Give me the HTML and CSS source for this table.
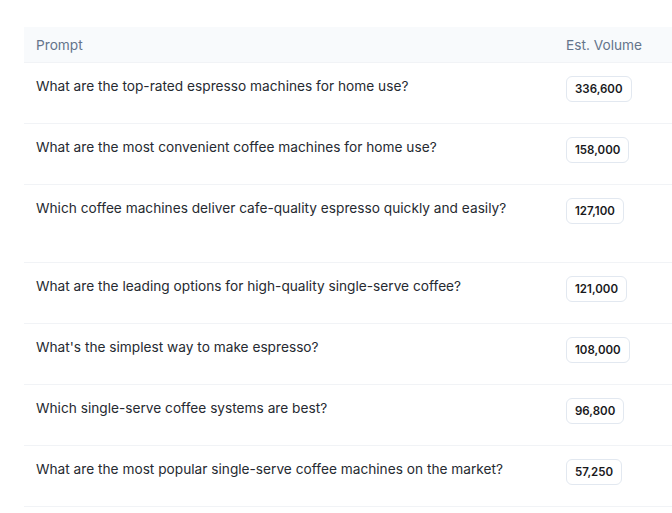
FILE: index.html
```html
<!DOCTYPE html>
<html>
	<head>
		<meta charset="UTF-8">
		<title>Prompts</title>
		<link rel="stylesheet" href="styles.css">
	</head>
	<body>
		<div class="page">
			<div class="p_table">
				<div class="p_row p_head">
					<div class="p_cell">Prompt</div>
					<div class="p_cell">Est. Volume</div>
				</div>
				<div class="p_row">
					<div class="p_cell">What are the top-rated espresso machines for home use?</div>
					<div class="p_cell"><span class="badge">336,600</span></div>
				</div>
				<div class="p_row">
					<div class="p_cell">What are the most convenient coffee machines for home use?</div>
					<div class="p_cell"><span class="badge">158,000</span></div>
				</div>
				<div class="p_row tall">
					<div class="p_cell">Which coffee machines deliver cafe-quality espresso quickly and easily?</div>
					<div class="p_cell"><span class="badge">127,100</span></div>
				</div>
				<div class="p_row">
					<div class="p_cell">What are the leading options for high-quality single-serve coffee?</div>
					<div class="p_cell"><span class="badge">121,000</span></div>
				</div>
				<div class="p_row">
					<div class="p_cell">What's the simplest way to make espresso?</div>
					<div class="p_cell"><span class="badge">108,000</span></div>
				</div>
				<div class="p_row">
					<div class="p_cell">Which single-serve coffee systems are best?</div>
					<div class="p_cell"><span class="badge">96,800</span></div>
				</div>
				<div class="p_row">
					<div class="p_cell">What are the most popular single-serve coffee machines on the market?</div>
					<div class="p_cell"><span class="badge">57,250</span></div>
				</div>
			</div>
		</div>
	</body>
</html>
```

FILE: styles.css
```css
* {
	margin: 0;
	padding: 0;
	box-sizing: border-box;
}

body {
	font-family: Inter, "Liberation Sans", sans-serif;
	color: #262a31;
	background: #fff;
	overflow: hidden;
}

.page {
	padding: 27px 0 0 24px;
}

.p_table {
	width: 648px;
}

.p_row {
	display: grid;
	grid-template-columns: 1fr 118px;
	border-bottom: 1px solid #f1f3f6;
	height: 61px;
}

.p_row.tall {
	height: 78px;
}

.p_cell {
	padding: 12px 12px 0;
	font-size: 13.7px;
	line-height: 22px;
}

.p_head {
	height: 36px;
	background: #f8fafc;
}

.p_head .p_cell {
	padding-top: 8px;
	color: #64748b;
	font-size: 13.7px;
	line-height: 20px;
}

.badge {
	display: inline-block;
	margin-top: 1px;
	padding: 0 8px;
	height: 26px;
	line-height: 24px;
	border: 1px solid #e2e8f0;
	border-radius: 6px;
	font-size: 11.5px;
	font-weight: 600;
	color: #18181b;
}
```
